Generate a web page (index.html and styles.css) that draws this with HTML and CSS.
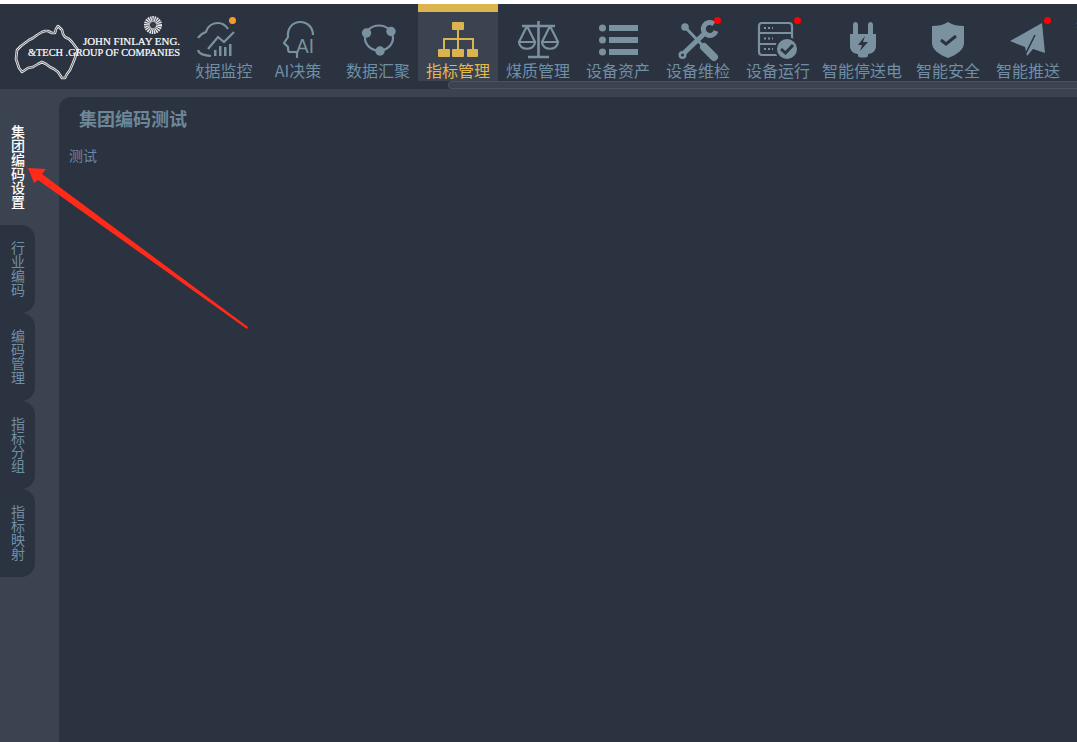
FILE: index.html
```html
<!DOCTYPE html>
<html lang="zh-CN">
<head>
<meta charset="utf-8">
<title>集团编码设置</title>
<link rel="stylesheet" href="styles.css">
</head>
<body>
<div class="app">
  <header class="header">
    <div class="logo">
      <svg class="logo-art" viewBox="0 0 196 85">
        <path class="aus-outer" d="M17 46 L21 42 L25 39 L29 36 L33 34 L37 31 L42 28 L45 27 L48 27 L52 29 L55 29 L56 25 L58 22 L60 24 L62 26 L63 30 L65 33 L69 35 L72 38 L75 42 L78 46 L76 50 L75 54 L73 59 L70 66 L67 70 L65 74 L62 74 L60 71 L58 68 L54 65 L50 63 L46 60 L42 58 L38 60 L33 63 L28 64 L22 68 L19 64 L18 61 L16 55 Z"/>
        <path class="aus-inner" d="M17 46 L21 42 L25 39 L29 36 L33 34 L37 31 L42 28 L45 27 L48 27 L52 29 L55 29 L56 25 L58 22 L60 24 L62 26 L63 30 L65 33 L69 35 L72 38 L75 42 L78 46 L76 50 L75 54 L73 59 L70 66 L67 70 L65 74 L62 74 L60 71 L58 68 L54 65 L50 63 L46 60 L42 58 L38 60 L33 63 L28 64 L22 68 L19 64 L18 61 L16 55 Z"/>
        <circle class="sun" cx="153" cy="21" r="6"/>
        <circle class="sun-core" cx="153" cy="21" r="1.6"/>
        <text class="logo-text" x="83" y="41" textLength="97" lengthAdjust="spacingAndGlyphs">JOHN FINLAY ENG.</text>
        <text class="logo-text" x="28" y="52" textLength="152" lengthAdjust="spacingAndGlyphs">&amp;TECH .GROUP OF COMPANIES</text>
      </svg>
    </div>
    <nav class="nav">
      <div class="nav-row">
        <a class="nav-item first">
          <svg class="icon" viewBox="0 0 44 44"><path class="ln" d="M-1 21C1 18 4 16 7 15C9 8 15 6 19 6C24 6 27 9 29 12M-1 33C0 37 4 38 12 39M9 32L19 20L25 25L35 15"/><path class="fill" d="M15 33h2.500v6h-2.500zM20 29h2.500v10h-2.500zM25 30h2.500v9h-2.500zM30 27h2.500v12h-2.500z"/></svg>
          <span class="label">数据监控</span><i class="dot orange"></i>
        </a>
        <a class="nav-item">
          <svg class="icon" viewBox="0 0 44 44"><path class="ln" d="M21 41V35H14C12 35 12 33 12 30L8 26L12 20C11 11 17 5 24 5C32 5 37 11 37 18"/><text class="ai" x="20" y="36" textLength="18" lengthAdjust="spacingAndGlyphs">AI</text></svg>
          <span class="label">AI决策</span>
        </a>
        <a class="nav-item">
          <svg class="icon" viewBox="0 0 44 44"><ellipse class="ln" cx="23" cy="21" rx="14" ry="12.5"/><circle class="fill" cx="10.5" cy="16" r="4.7"/><circle class="fill" cx="35" cy="14.5" r="4.7"/><circle class="fill" cx="24" cy="34" r="4.7"/></svg>
          <span class="label">数据汇聚</span>
        </a>
        <a class="nav-item active">
          <svg class="icon" viewBox="0 0 44 44"><path class="gold-ln" d="M22 12V32M8 32V22H37V32"/><rect class="gold" x="16" y="5" width="12" height="8" rx="1"/><rect class="gold" x="2" y="32" width="12" height="8" rx="1"/><rect class="gold" x="16" y="32" width="12" height="8" rx="1"/><rect class="gold" x="31" y="32" width="11" height="8" rx="1"/></svg>
          <span class="label">指标管理</span>
        </a>
        <a class="nav-item">
          <svg class="icon" viewBox="0 0 44 44"><path class="ln wide-ln" d="M22.500 4V40M12 40H33M6 9H39"/><path class="ln" d="M11 9L3 25M11 9L19 25M34 9L26 25M34 9L42 25M3 25C3 34 19 34 19 25ZM26 25C26 34 42 34 42 25Z"/></svg>
          <span class="label">煤质管理</span>
        </a>
        <a class="nav-item">
          <svg class="icon" viewBox="0 0 44 44"><circle class="fill" cx="6.500" cy="11" r="3.500"/><circle class="fill" cx="6.500" cy="23" r="3.500"/><circle class="fill" cx="6.500" cy="35" r="3.500"/><path class="fill" d="M13 8H42V14H13zM13 20H42V26H13zM13 32H42V38H13z"/></svg>
          <span class="label">设备资产</span>
        </a>
        <a class="nav-item">
          <svg class="icon" viewBox="0 0 44 44"><circle class="fill" cx="9" cy="10" r="3.800"/><path class="thin" d="M9 10L27 29"/><path class="thick" d="M28 30L38 40"/><path class="mid" d="M7 37L30 15"/><path class="wrench-head" d="M38 7A6.500 6.500 0 1 0 40 14"/><circle class="fill" cx="6.500" cy="38" r="4"/><circle class="bolt" cx="6.500" cy="38" r="1.500"/></svg>
          <span class="label">设备维检</span><i class="dot red"></i>
        </a>
        <a class="nav-item">
          <svg class="icon" viewBox="0 0 44 44"><rect class="ln" x="3" y="6" width="33" height="32" rx="3"/><path class="ln" d="M3 16H36M3 27H36"/><path class="dash" d="M8 11H17M8 21.500H17M8 32H17"/><circle class="fill ringed" cx="31" cy="32" r="11"/><path class="check" d="M25 32L29.500 36L37 28"/></svg>
          <span class="label">设备运行</span><i class="dot red"></i>
        </a>
        <a class="nav-item wide">
          <svg class="icon" viewBox="0 0 44 44"><path class="fill" d="M13 8C13 4 18 4 18 8V17H28V8C28 4 33 4 33 8V17H36V29C36 34 32 37 28 37V39C28 41 18 41 18 39V37C14 37 10 34 10 29V17H13Z"/><path class="bolt" d="M25 19L18 28H22L20 34L28 25H23Z"/></svg>
          <span class="label">智能停送电</span>
        </a>
        <a class="nav-item">
          <svg class="icon" viewBox="0 0 44 44"><path class="fill" d="M22 5C27 8 32 9 38 9V26C38 33 30 38 22 41C14 38 6 33 6 26V9C12 9 17 8 22 5Z"/><path class="check" d="M15 23L20 27L30 19"/></svg>
          <span class="label">智能安全</span>
        </a>
        <a class="nav-item">
          <svg class="icon" viewBox="0 0 44 44"><path class="fill" d="M36 6L39 36L27 32L21 39L19 30L4 24Z"/><path class="crease" d="M20 36L29 18"/></svg>
          <span class="label">智能推送</span><i class="dot red"></i>
        </a>
        <a class="nav-item"><span class="label">智能报表</span></a>
      </div>
      <div class="track"><div class="thumb"></div></div>
    </nav>
  </header>

  <main class="main">
    <aside class="side">
      <a class="tab current">集团编码设置</a>
      <a class="tab">行业编码</a>
      <a class="tab">编码管理</a>
      <a class="tab">指标分组</a>
      <a class="tab">指标映射</a>
    </aside>
    <section class="content">
      <h1 class="title">集团编码测试</h1>
      <p class="body-text">测试</p>
    </section>
  </main>

  <svg class="arrow" viewBox="0 0 1077 742"><polygon points="28,168 46,169 42,174 248,327 247,329 38,180 34,183"/></svg>
</div>
</body>
</html>
```
FILE: styles.css
```css
* { box-sizing: border-box; }
html, body { margin: 0; height: 100%; }
body {
  background: #fff;
  overflow: hidden;
  font-family: "Noto Sans CJK SC", "Liberation Sans", sans-serif;
}
.app {
  position: relative;
  width: 1077px;
  height: 742px;
  padding-top: 4px;
  display: flex;
  flex-direction: column;
}
.header {
  height: 85px;
  flex: none;
  display: flex;
  background: #2b3240;
}
.logo { width: 196px; flex: none; }
.logo-art { display: block; width: 196px; height: 85px; }
.aus-outer { fill: none; stroke: #e8e8e8; stroke-width: 2.600; stroke-linejoin: round; }
.aus-inner { fill: none; stroke: #2b3240; stroke-width: .7; stroke-linejoin: round; }
.sun { fill: none; stroke: #e8e8e8; stroke-width: 6; stroke-dasharray: 1.200 .6; }
.sun-core { fill: #444; }
.logo-text { font: 10px "Liberation Serif", serif; fill: #fff; stroke: #fff; stroke-width: .2; }

.nav { flex: 1; min-width: 0; overflow: hidden; display: flex; flex-direction: column; }
.nav-row { display: flex; height: 77px; margin-left: -18px; flex: none; }
.nav-item {
  position: relative;
  flex: none;
  width: 80px;
  height: 77px;
  padding-top: 13px;
  display: flex;
  flex-direction: column;
  align-items: center;
  color: #6f8fa6;
}
.nav-item.first { padding-left: 5px; }
.nav-item.wide { width: 90px; padding-right: 2px; }
.nav-item.active {
  background: #3c4350;
  border-top: 8px solid #dcb44f;
  padding-top: 5px;
  color: #e3b84f;
}
.icon { width: 44px; height: 44px; flex: none; overflow: visible; }
.label { font-size: 16px; line-height: 20px; white-space: nowrap; margin-top: -1px; }
.dot { position: absolute; top: 13px; width: 7px; height: 7px; border-radius: 50%; }
.dot.orange { background: #f89a2b; left: 51px; }
.dot.red { background: #f00; left: 56px; }

.ln { fill: none; stroke: #7a929f; stroke-width: 2.200; }
.wide-ln { stroke-width: 2.600; }
.fill { fill: #7a929f; }
.ringed { stroke: #2b3240; stroke-width: 2; }
.thick { fill: none; stroke: #7a929f; stroke-width: 8; stroke-linecap: round; }
.mid { fill: none; stroke: #7a929f; stroke-width: 5; }
.thin { fill: none; stroke: #7a929f; stroke-width: 3; stroke-linecap: round; }
.wrench-head { fill: none; stroke: #7a929f; stroke-width: 5; }
.dash { fill: none; stroke: #7a929f; stroke-width: 2; stroke-dasharray: 2 2; }
.check { fill: none; stroke: #2b3240; stroke-width: 3; }
.bolt { fill: #2b3240; }
.crease { fill: none; stroke: #2b3240; stroke-width: 1.500; }
.ai { font: 20px "Liberation Sans", sans-serif; fill: #7a929f; }
.gold { fill: #dcb44f; }
.gold-ln { fill: none; stroke: #dcb44f; stroke-width: 2; }

.track { height: 8px; flex: none; padding-left: 252px; }
.thumb {
  height: 8px;
  background: #3c4350;
  border: 1px solid #4b5260;
  border-right: 0;
  border-radius: 4px 0 0 4px;
}

.main { flex: 1; display: flex; min-height: 0; padding-top: 8px; background: #3c4350; }
.side { width: 59px; flex: none; display: flex; flex-direction: column; }
.tab {
  width: 35px;
  height: 88px;
  padding-left: 11px;
  padding-bottom: 3px;
  display: flex;
  align-items: center;
  background: #2b3240;
  border-radius: 0 14px 14px 0;
  color: #6f8fa6;
  font-size: 14px;
  line-height: 14px;
  word-break: break-all;
}
.tab.current {
  height: 128px;
  padding-top: 10px;
  padding-bottom: 0;
  background: transparent;
  color: #fff;
  font-weight: 500;
  width: 25px;
}
.content { flex: 1; background: #2b3240; border-top-left-radius: 12px; padding: 10px 10px; min-width: 0; }
.title { margin: 0 0 0 10px; font-size: 18px; line-height: 22px; font-weight: bold; color: #6d8797; }
.body-text { margin: 16px 0 0; font-size: 14px; line-height: 20px; color: #6a88a8; }

.arrow { position: absolute; left: 0; top: 0; width: 1077px; height: 742px; pointer-events: none; }
.arrow polygon { fill: #ff2a1a; }
```
